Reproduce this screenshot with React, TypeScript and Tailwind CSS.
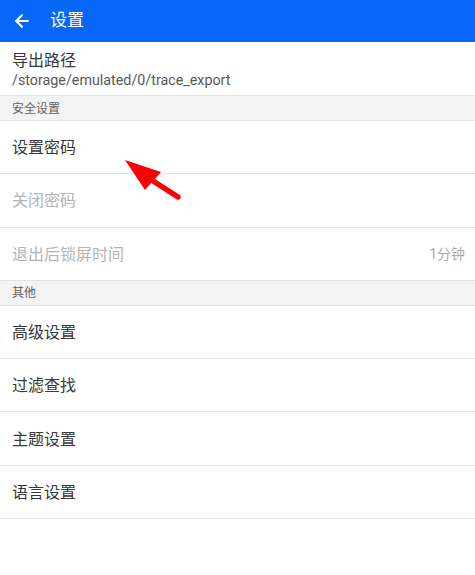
import { ArrowLeft } from "lucide-react";

const font = { fontFamily: '"Roboto", "Noto Sans CJK SC", sans-serif' };

const Row = ({ label, value, disabled }: { label: string; value?: string; disabled?: boolean }) => (
  <div className="flex h-[53.3px] items-center justify-between border-b border-[#e2e2e2] pl-3 pr-[10px] pt-[2px]">
    <span className={`text-[16px] ${disabled ? "text-[#b4b4b4]" : "text-[#383838]"}`}>{label}</span>
    {value && <span className="text-[14px] text-[#aaaaaa]">{value}</span>}
  </div>
);

const Section = ({ title }: { title: string }) => (
  <div className="flex h-[25px] items-center border-b border-[#e2e2e2] bg-[#f3f3f3] px-3 pt-[1px] text-[12px] text-[#606060]">
    {title}
  </div>
);

export default function App() {
  return (
    <div className="relative h-[575px] w-[475px] bg-white" style={font}>
      <div className="flex h-[42px] items-center bg-[#0767fa] px-3 text-white">
        <ArrowLeft className="h-[20px] w-[20px]" strokeWidth={2.5} />
        <span className="ml-[18px] text-[17px]">设置</span>
      </div>
      <div className="flex h-[54px] flex-col justify-center border-b border-[#e2e2e2] px-3 pt-[2px]">
        <span className="text-[16px] leading-[21px] text-[#383838]">导出路径</span>
        <span className="text-[14.3px] leading-[19px] text-[#595959]">/storage/emulated/0/trace_export</span>
      </div>
      <Section title="安全设置" />
      <Row label="设置密码" />
      <Row label="关闭密码" disabled />
      <Row label="退出后锁屏时间" value="1分钟" disabled />
      <Section title="其他" />
      <Row label="高级设置" />
      <Row label="过滤查找" />
      <Row label="主题设置" />
      <Row label="语言设置" />

      <svg className="absolute left-0 top-0" width="475" height="575" viewBox="0 0 475 575">
        <line x1="150" y1="179" x2="178" y2="197" stroke="#ff0000" strokeWidth="5.5" strokeLinecap="round" />
        <polygon points="125,160 161,172 145,190" fill="#ff0000" />
      </svg>
    </div>
  );
}
